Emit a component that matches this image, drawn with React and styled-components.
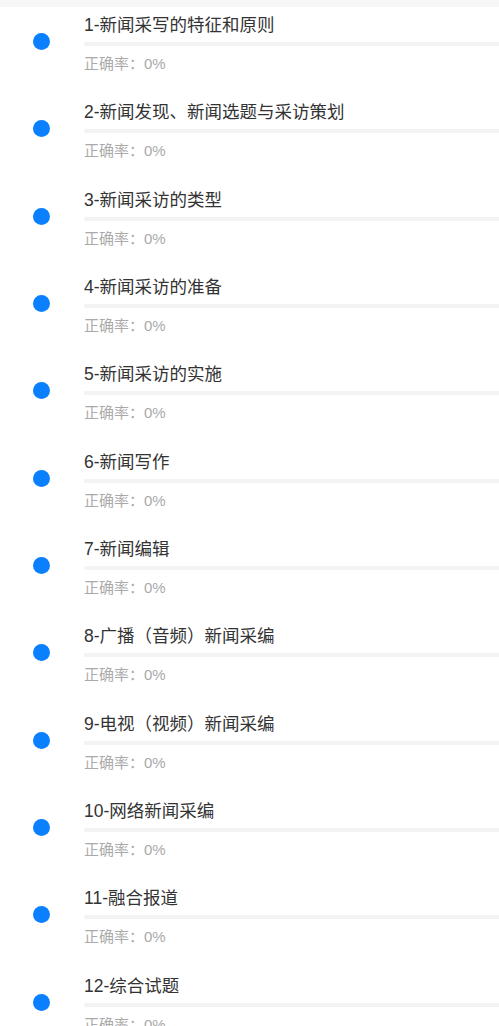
import React from 'react';
import styled, { createGlobalStyle } from 'styled-components';

const GlobalStyle = createGlobalStyle`
  body {
    margin: 0;
    background: #fff;
    font-family: "Liberation Sans", "Noto Sans CJK SC", sans-serif;
  }
`;

const Page = styled.div`
  width: 499px;
  height: 1026px;
  overflow: hidden;
  border-top: 7px solid #f7f7f7;
  box-sizing: border-box;
`;

const Item = styled.div`
  display: flex;
  height: 87.33px;
  box-sizing: border-box;
  padding-top: 7px;
`;

const DotCol = styled.div`
  flex: 0 0 84px;
`;

const Dot = styled.span`
  display: block;
  width: 17px;
  height: 17px;
  margin: 19px 0 0 33px;
  border-radius: 50%;
  background: #0a80fe;
`;

const Body = styled.div`
  flex: 1;
  display: flex;
  flex-direction: column;
`;

const Title = styled.div`
  font-size: 17.5px;
  line-height: 22px;
  color: #333;
  white-space: nowrap;
`;

const Bar = styled.div`
  height: 4px;
  margin-top: 6px;
  border-radius: 2px 0 0 2px;
  background: #f3f3f3;
`;

const Rate = styled.div`
  margin-top: 8px;
  font-size: 15px;
  line-height: 20px;
  color: #aaa;
`;

const chapters = [
  '1-新闻采写的特征和原则',
  '2-新闻发现、新闻选题与采访策划',
  '3-新闻采访的类型',
  '4-新闻采访的准备',
  '5-新闻采访的实施',
  '6-新闻写作',
  '7-新闻编辑',
  '8-广播（音频）新闻采编',
  '9-电视（视频）新闻采编',
  '10-网络新闻采编',
  '11-融合报道',
  '12-综合试题',
];

export default function App() {
  return (
    <>
      <GlobalStyle />
      <Page>
        {chapters.map((name) => (
          <Item key={name}>
            <DotCol>
              <Dot />
            </DotCol>
            <Body>
              <Title>{name}</Title>
              <Bar />
              <Rate>正确率：0%</Rate>
            </Body>
          </Item>
        ))}
      </Page>
    </>
  );
}
